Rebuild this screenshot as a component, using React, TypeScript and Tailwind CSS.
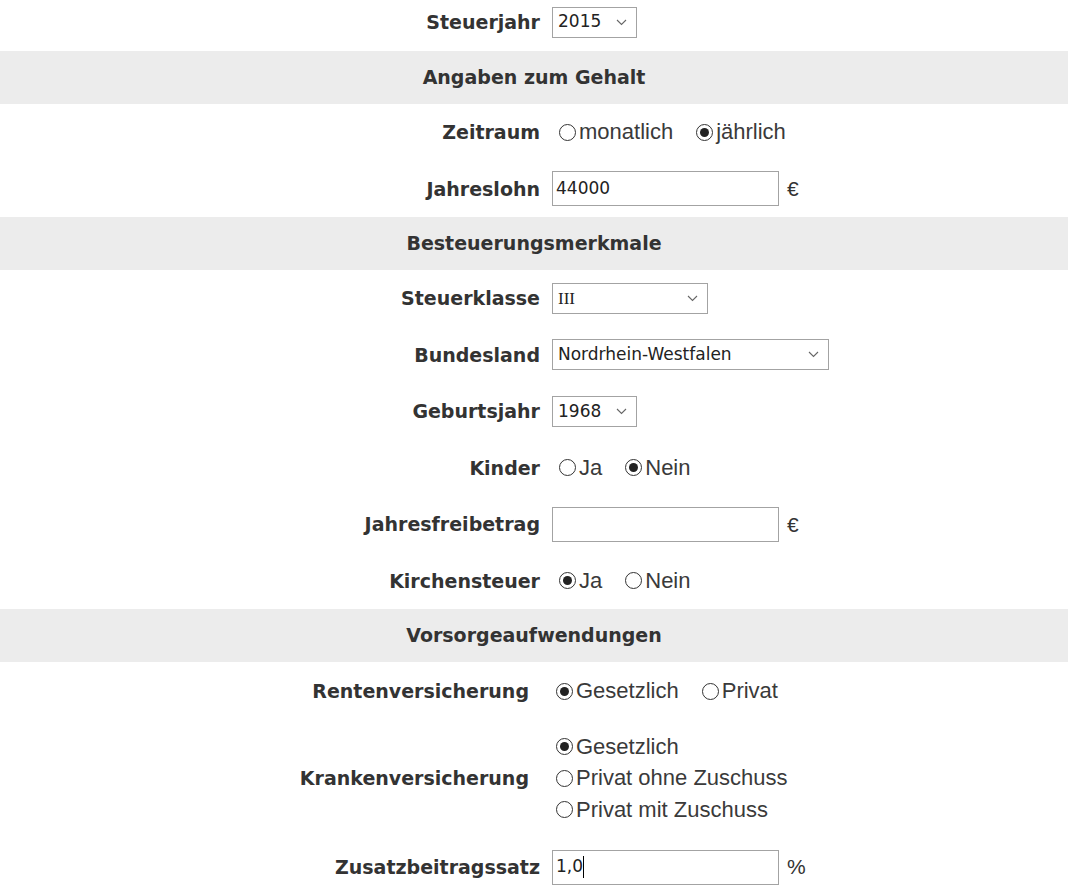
import React from 'react';

const labelFont = "[font-family:'DejaVu_Sans',Verdana,sans-serif]";

function Header({ title }: { title: string }) {
  return (
    <div className={`h-[53px] bg-[#ececec] flex items-center justify-center font-bold text-[19px] text-[#333] ${labelFont}`}>
      {title}
    </div>
  );
}

function Row({
  label,
  h = 'h-[56.5px]',
  lw = 'w-[540px]',
  pl = 'pl-3',
  children,
}: {
  label: string;
  h?: string;
  lw?: string;
  pl?: string;
  children: React.ReactNode;
}) {
  return (
    <div className={`flex items-center ${h}`}>
      <div className={`${lw} shrink-0 text-right font-bold text-[19px] text-[#333] ${labelFont}`}>{label}</div>
      <div className={`${pl} flex items-center`}>{children}</div>
    </div>
  );
}

function Chevron() {
  return (
    <svg width="11" height="7" viewBox="0 0 11 7" className="shrink-0">
      <polyline points="1,1 5.5,5.5 10,1" fill="none" stroke="#666" strokeWidth="1.1" />
    </svg>
  );
}

function Select({ value, width, serif = false }: { value: string; width: string; serif?: boolean }) {
  return (
    <div className={`${width} h-[31px] border border-[#a3a3a3] bg-white flex items-center justify-between pl-[5px] pr-[9px]`}>
      <span
        className={
          serif
            ? "[font-family:'Liberation_Serif',serif] text-[17px] text-[#222]"
            : "[font-family:'DejaVu_Sans',sans-serif] text-[17px] text-[#222]"
        }
      >
        {value}
      </span>
      <Chevron />
    </div>
  );
}

function TextBox({ value = '', caret = false }: { value?: string; caret?: boolean }) {
  return (
    <div className="w-[227px] h-[35px] border border-[#a3a3a3] bg-white flex items-center pl-[3px]">
      <span className="[font-family:'DejaVu_Sans',sans-serif] text-[17px] text-[#222]">{value}</span>
      {caret && <span className="w-px h-[22px] bg-black" />}
    </div>
  );
}

function Radio({ label, checked = false }: { label: string; checked?: boolean }) {
  return (
    <span className="flex items-center mr-[16px]">
      <span className="ml-[7px] shrink-0 w-[17px] h-[17px] rounded-full border border-[#333] bg-white flex items-center justify-center">
        {checked && <span className="w-[9px] h-[9px] rounded-full bg-[#222]" />}
      </span>
      <span className="ml-[3px] [font-family:'Liberation_Sans',Arial,sans-serif] text-[22px] text-[#3a3a3a] leading-none whitespace-nowrap">
        {label}
      </span>
    </span>
  );
}

function Unit({ sign }: { sign: string }) {
  return <span className="ml-[8px] [font-family:'Liberation_Sans',Arial,sans-serif] text-[21px] text-[#333]">{sign}</span>;
}

export default function App() {
  return (
    <div className="w-[1068px] min-h-[890px] bg-white">
      <div className="flex items-center h-[44px] mb-[7px]">
        <div className={`w-[540px] text-right font-bold text-[19px] text-[#333] ${labelFont}`}>Steuerjahr</div>
        <div className="pl-3">
          <Select value="2015" width="w-[85px]" />
        </div>
      </div>

      <Header title="Angaben zum Gehalt" />
      <Row label="Zeitraum">
        <Radio label="monatlich" />
        <Radio label="jährlich" checked />
      </Row>
      <Row label="Jahreslohn">
        <TextBox value="44000" />
        <Unit sign="€" />
      </Row>

      <Header title="Besteuerungsmerkmale" />
      <Row label="Steuerklasse">
        <Select value="III" width="w-[156px]" serif />
      </Row>
      <Row label="Bundesland">
        <Select value="Nordrhein-Westfalen" width="w-[277px]" />
      </Row>
      <Row label="Geburtsjahr">
        <Select value="1968" width="w-[85px]" />
      </Row>
      <Row label="Kinder">
        <Radio label="Ja" />
        <Radio label="Nein" checked />
      </Row>
      <Row label="Jahresfreibetrag">
        <TextBox />
        <Unit sign="€" />
      </Row>
      <Row label="Kirchensteuer">
        <Radio label="Ja" checked />
        <Radio label="Nein" />
      </Row>

      <Header title="Vorsorgeaufwendungen" />
      <Row label="Rentenversicherung" h="h-[58px]" lw="w-[529px]" pl="pl-[20px]">
        <Radio label="Gesetzlich" checked />
        <Radio label="Privat" />
      </Row>
      <Row label="Krankenversicherung" h="h-[116px]" lw="w-[529px]" pl="pl-[20px]">
        <div className="flex flex-col">
          <div className="h-[31.5px] flex items-center">
            <Radio label="Gesetzlich" checked />
          </div>
          <div className="h-[31.5px] flex items-center">
            <Radio label="Privat ohne Zuschuss" />
          </div>
          <div className="h-[31.5px] flex items-center">
            <Radio label="Privat mit Zuschuss" />
          </div>
        </div>
      </Row>
      <Row label="Zusatzbeitragssatz" h="h-[62px]">
        <TextBox value="1,0" caret />
        <Unit sign="%" />
      </Row>
    </div>
  );
}
